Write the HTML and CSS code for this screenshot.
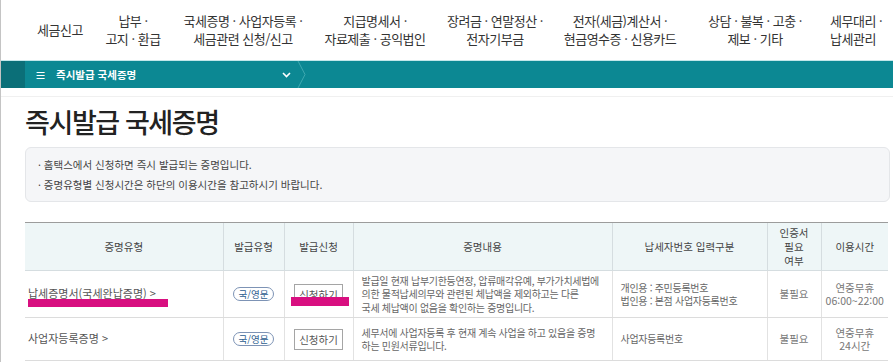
FILE: index.html
```html
<!DOCTYPE html>
<html lang="ko">
<head>
  <meta charset="UTF-8" />
  <title>즉시발급 국세증명</title>
  <link rel="stylesheet" href="styles.css">
</head>
<body>
  <nav class="gnb">
    <div class="gnb-item w1">세금신고</div>
    <div class="gnb-item w2">납부 ·<br>고지 · 환급</div>
    <div class="gnb-item w3">국세증명 · 사업자등록 ·<br>세금관련 신청/신고</div>
    <div class="gnb-item w4">지급명세서 ·<br>자료제출 · 공익법인</div>
    <div class="gnb-item w5">장려금 · 연말정산 ·<br>전자기부금</div>
    <div class="gnb-item w6">전자(세금)계산서 ·<br>현금영수증 · 신용카드</div>
    <div class="gnb-item w7">상담 · 불복 · 고충 ·<br>제보 · 기타</div>
    <div class="gnb-item w8">세무대리 ·<br>납세관리</div>
  </nav>

  <div class="location">
    <div class="loc-home"></div>
    <div class="loc-current">
      <span class="loc-menu">≡</span>
      <span class="loc-title">즉시발급 국세증명</span>
      <svg class="loc-arrow" width="9" height="6" viewBox="0 0 9 6"><path d="M1 1l3.5 3.5L8 1" fill="none" stroke="#fff" stroke-width="1.6"/></svg>
    </div>
    <svg class="loc-sep" width="10" height="27" viewBox="0 0 10 27"><path d="M1 0l7 13.5-7 13.5" fill="none" stroke="#3fa8b0" stroke-width="1"/></svg>
  </div>

  <div class="container">
    <h1 class="page-title">즉시발급 국세증명</h1>

    <div class="info-box">
      <p>· 홈택스에서 신청하면 즉시 발급되는 증명입니다.</p>
      <p>· 증명유형별 신청시간은 하단의 이용시간을 참고하시기 바랍니다.</p>
    </div>

    <table class="cert-table">
      <colgroup>
        <col style="width:198px">
        <col style="width:61px">
        <col style="width:69px">
        <col style="width:259px">
        <col style="width:155px">
        <col style="width:54px">
        <col style="width:67px">
      </colgroup>
      <thead>
        <tr>
          <th>증명유형</th>
          <th>발급유형</th>
          <th>발급신청</th>
          <th>증명내용</th>
          <th>납세자번호 입력구분</th>
          <th>인증서<br>필요<br>여부</th>
          <th>이용시간</th>
        </tr>
      </thead>
      <tbody>
        <tr class="row1">
          <td class="name"><span class="mark-wrap">납세증명서(국세완납증명) &gt;<span class="mark mark-name"></span></span></td>
          <td class="center"><span class="badge">국/영문</span></td>
          <td class="center"><span class="mark-wrap"><button class="apply">신청하기</button><span class="mark mark-btn"></span></span></td>
          <td class="desc">발급일 현재 납부기한등연장, 압류매각유예, 부가가치세법에<br>의한 물적납세의무와 관련된 체납액을 제외하고는 다른<br>국세 체납액이 없음을 확인하는 증명입니다.</td>
          <td class="desc">개인용 : 주민등록번호<br>법인용 : 본점 사업자등록번호</td>
          <td class="center muted">불필요</td>
          <td class="center muted">연중무휴<br>06:00~22:00</td>
        </tr>
        <tr class="row2">
          <td class="name">사업자등록증명 &gt;</td>
          <td class="center"><span class="badge">국/영문</span></td>
          <td class="center"><button class="apply">신청하기</button></td>
          <td class="desc">세무서에 사업자등록 후 현재 계속 사업을 하고 있음을 증명<br>하는 민원서류입니다.</td>
          <td class="desc">사업자등록번호</td>
          <td class="center muted">불필요</td>
          <td class="center muted">연중무휴<br>24시간</td>
        </tr>
      </tbody>
    </table>
  </div>
</body>
</html>
```

FILE: styles.css
```css
body {
  margin: 0;
  padding: 0;
  background-color: #fff;
  color: #333;
  font-family: "Noto Sans CJK KR", "Noto Sans", sans-serif;
  border-left: 1px solid #c4c4c4;
  height: 362px;
  box-sizing: border-box;
  overflow: hidden;
}
.gnb {
  display: flex;
  align-items: center;
  height: 60px;
  padding-left: 19px;
}
.gnb-item {
  text-align: center;
  white-space: nowrap;
  font-size: 13px;
  line-height: 18px;
  color: #333;
  letter-spacing: -0.5px;
}
.w1 { width: 80px; }
.w2 { width: 66px; }
.w3 { width: 154px; }
.w4 { width: 110px; }
.w5 { width: 130px; }
.w6 { width: 120px; }
.w7 { width: 150px; }
.w8 { width: 46px; }

.location {
  display: flex;
  align-items: center;
  height: 27px;
  background-color: #0c8893;
  border-top: 1px solid #c3e7ea;
}
.loc-home {
  width: 24px;
  height: 100%;
  background-color: #0b6f78;
}
.loc-current {
  display: flex;
  align-items: center;
  width: 262px;
  padding-left: 10px;
  color: #fff;
  font-size: 10.5px;
  font-weight: bold;
}
.loc-menu {
  margin-right: 10px;
  font-size: 11px;
}
.loc-title {
  flex: 1;
}
.loc-arrow {
  margin-right: 6px;
}
.loc-sep {
  display: block;
}

.container {
  padding: 0 3px 0 24px;
  border-top: 1px solid #f0f0f0;
  margin-top: 8px;
}
.page-title {
  margin: 8px 0 8px;
  font-size: 27px;
  line-height: 34px;
  font-weight: 500;
  color: #222;
  letter-spacing: -1.4px;
}
.info-box {
  background-color: #f5f6f8;
  border: 1px solid #e4e6e9;
  border-radius: 6px;
  padding: 7px 12px 6px;
}
.info-box p {
  margin: 0;
  font-size: 10.5px;
  line-height: 20px;
  color: #444;
}

.cert-table {
  width: 863px;
  margin-top: 20px;
  border-collapse: collapse;
  table-layout: fixed;
  font-size: 10.5px;
  color: #666;
}
.cert-table th {
  height: 47px;
  padding: 0;
  background-color: #eef6f7;
  border-top: 1px solid #9c9c9c;
  border-left: 1px solid #d5dde0;
  border-bottom: 1px solid #d5dde0;
  font-weight: normal;
  color: #444;
  font-size: 10.5px;
  line-height: 14px;
}
.cert-table th:first-child,
.cert-table td:first-child {
  border-left: none;
}
.cert-table td {
  padding: 0;
  border-left: 1px solid #e2e2e2;
  border-bottom: 1px solid #dcdcdc;
  vertical-align: middle;
  line-height: 13.5px;
}
.row1 td { height: 46px; }
.row2 td { height: 42px; }
.name {
  font-size: 11px;
  color: #555;
}
.cert-table td.name {
  padding-left: 3px;
}
.center {
  text-align: center;
}
.cert-table td.desc {
  padding: 0 0 0 8px;
  white-space: nowrap;
  overflow: hidden;
  font-size: 10px;
  letter-spacing: -0.3px;
}
.muted {
  color: #777;
}
.badge {
  display: inline-block;
  padding: 0 5px;
  border: 1px solid #7d93b5;
  border-radius: 8px;
  font-size: 9.5px;
  line-height: 12px;
  color: #2c5d8f;
}
.apply {
  display: block;
  width: 49px;
  height: 21px;
  margin: 0 auto;
  padding: 0;
  background-color: #fff;
  border: 1px solid #a5a5a5;
  font-family: inherit;
  font-size: 10.5px;
  color: #555;
}
.mark-wrap {
  position: relative;
  display: inline-block;
}
.mark {
  position: absolute;
  background-color: #d80f80;
}
.mark-name {
  left: 0;
  right: -12px;
  top: 12px;
  height: 8px;
}
.mark-btn {
  left: -3px;
  right: -6px;
  top: 13px;
  height: 9px;
}
```
